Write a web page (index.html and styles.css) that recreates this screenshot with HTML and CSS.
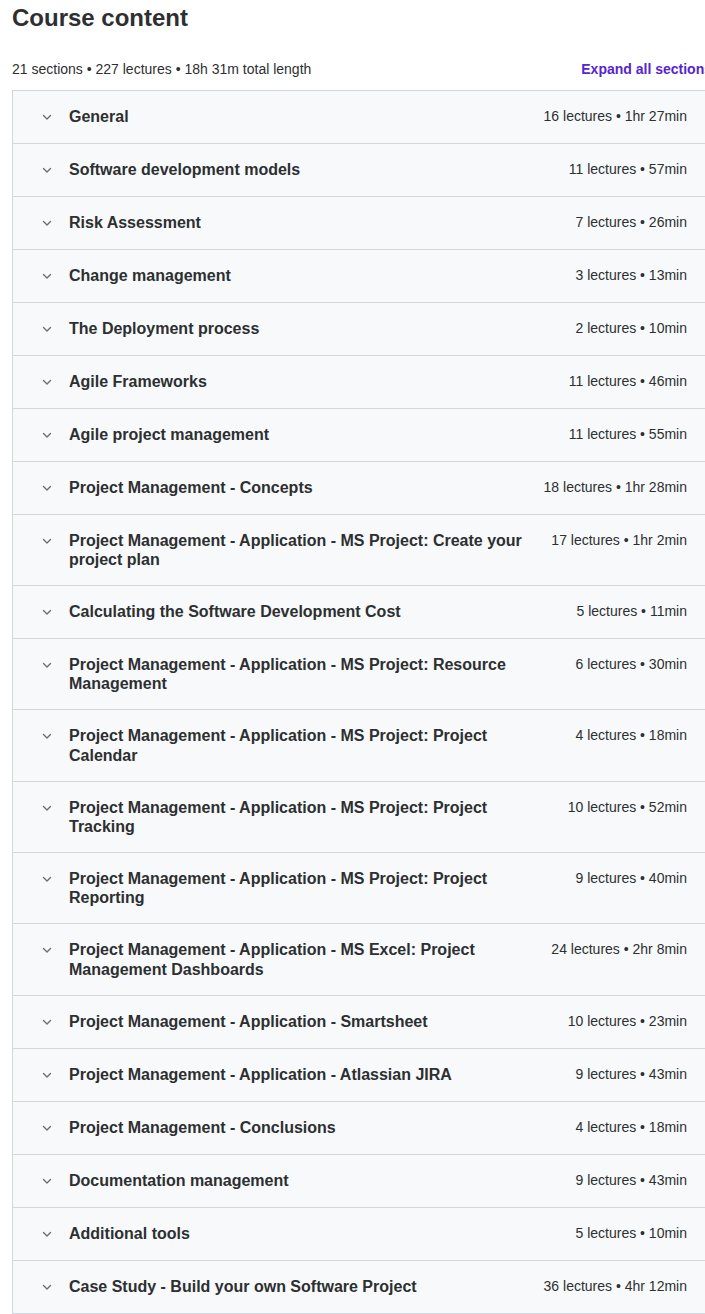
FILE: index.html
```html
<!DOCTYPE html>
<html lang="en">
<head>
<meta charset="utf-8">
<title>Course content</title>
<link rel="stylesheet" href="styles.css">
</head>
<body>
<main class="curriculum">
  <h2 class="curriculum-title">Course content</h2>
  <div class="curriculum-summary">
    <span>21 sections • 227 lectures • 18h 31m total length</span>
    <button class="expand-all" type="button">Expand all sections</button>
  </div>
  <div class="sections">
    <div class="section"><span class="chev"><svg viewBox="0 0 12 12"><path d="M2.5 4.5 6 8 9.5 4.5"/></svg></span><span class="section-title">General</span><span class="section-meta">16 lectures • 1hr 27min</span></div>
    <div class="section"><span class="chev"><svg viewBox="0 0 12 12"><path d="M2.5 4.5 6 8 9.5 4.5"/></svg></span><span class="section-title">Software development models</span><span class="section-meta">11 lectures • 57min</span></div>
    <div class="section"><span class="chev"><svg viewBox="0 0 12 12"><path d="M2.5 4.5 6 8 9.5 4.5"/></svg></span><span class="section-title">Risk Assessment</span><span class="section-meta">7 lectures • 26min</span></div>
    <div class="section"><span class="chev"><svg viewBox="0 0 12 12"><path d="M2.5 4.5 6 8 9.5 4.5"/></svg></span><span class="section-title">Change management</span><span class="section-meta">3 lectures • 13min</span></div>
    <div class="section"><span class="chev"><svg viewBox="0 0 12 12"><path d="M2.5 4.5 6 8 9.5 4.5"/></svg></span><span class="section-title">The Deployment process</span><span class="section-meta">2 lectures • 10min</span></div>
    <div class="section"><span class="chev"><svg viewBox="0 0 12 12"><path d="M2.5 4.5 6 8 9.5 4.5"/></svg></span><span class="section-title">Agile Frameworks</span><span class="section-meta">11 lectures • 46min</span></div>
    <div class="section"><span class="chev"><svg viewBox="0 0 12 12"><path d="M2.5 4.5 6 8 9.5 4.5"/></svg></span><span class="section-title">Agile project management</span><span class="section-meta">11 lectures • 55min</span></div>
    <div class="section"><span class="chev"><svg viewBox="0 0 12 12"><path d="M2.5 4.5 6 8 9.5 4.5"/></svg></span><span class="section-title">Project Management - Concepts</span><span class="section-meta">18 lectures • 1hr 28min</span></div>
    <div class="section"><span class="chev"><svg viewBox="0 0 12 12"><path d="M2.5 4.5 6 8 9.5 4.5"/></svg></span><span class="section-title">Project Management - Application - MS Project: Create your project plan</span><span class="section-meta">17 lectures • 1hr 2min</span></div>
    <div class="section"><span class="chev"><svg viewBox="0 0 12 12"><path d="M2.5 4.5 6 8 9.5 4.5"/></svg></span><span class="section-title">Calculating the Software Development Cost</span><span class="section-meta">5 lectures • 11min</span></div>
    <div class="section"><span class="chev"><svg viewBox="0 0 12 12"><path d="M2.5 4.5 6 8 9.5 4.5"/></svg></span><span class="section-title">Project Management - Application - MS Project: Resource Management</span><span class="section-meta">6 lectures • 30min</span></div>
    <div class="section"><span class="chev"><svg viewBox="0 0 12 12"><path d="M2.5 4.5 6 8 9.5 4.5"/></svg></span><span class="section-title">Project Management - Application - MS Project: Project Calendar</span><span class="section-meta">4 lectures • 18min</span></div>
    <div class="section"><span class="chev"><svg viewBox="0 0 12 12"><path d="M2.5 4.5 6 8 9.5 4.5"/></svg></span><span class="section-title">Project Management - Application - MS Project: Project Tracking</span><span class="section-meta">10 lectures • 52min</span></div>
    <div class="section"><span class="chev"><svg viewBox="0 0 12 12"><path d="M2.5 4.5 6 8 9.5 4.5"/></svg></span><span class="section-title">Project Management - Application - MS Project: Project Reporting</span><span class="section-meta">9 lectures • 40min</span></div>
    <div class="section"><span class="chev"><svg viewBox="0 0 12 12"><path d="M2.5 4.5 6 8 9.5 4.5"/></svg></span><span class="section-title">Project Management - Application - MS Excel: Project Management Dashboards</span><span class="section-meta">24 lectures • 2hr 8min</span></div>
    <div class="section"><span class="chev"><svg viewBox="0 0 12 12"><path d="M2.5 4.5 6 8 9.5 4.5"/></svg></span><span class="section-title">Project Management - Application - Smartsheet</span><span class="section-meta">10 lectures • 23min</span></div>
    <div class="section"><span class="chev"><svg viewBox="0 0 12 12"><path d="M2.5 4.5 6 8 9.5 4.5"/></svg></span><span class="section-title">Project Management - Application - Atlassian JIRA</span><span class="section-meta">9 lectures • 43min</span></div>
    <div class="section"><span class="chev"><svg viewBox="0 0 12 12"><path d="M2.5 4.5 6 8 9.5 4.5"/></svg></span><span class="section-title">Project Management - Conclusions</span><span class="section-meta">4 lectures • 18min</span></div>
    <div class="section"><span class="chev"><svg viewBox="0 0 12 12"><path d="M2.5 4.5 6 8 9.5 4.5"/></svg></span><span class="section-title">Documentation management</span><span class="section-meta">9 lectures • 43min</span></div>
    <div class="section"><span class="chev"><svg viewBox="0 0 12 12"><path d="M2.5 4.5 6 8 9.5 4.5"/></svg></span><span class="section-title">Additional tools</span><span class="section-meta">5 lectures • 10min</span></div>
    <div class="section"><span class="chev"><svg viewBox="0 0 12 12"><path d="M2.5 4.5 6 8 9.5 4.5"/></svg></span><span class="section-title">Case Study - Build your own Software Project</span><span class="section-meta">36 lectures • 4hr 12min</span></div>
  </div>
</main>
</body>
</html>
```
FILE: styles.css
```css
html {
  overflow: hidden;
}

body {
  margin: 0;
  background: #ffffff;
  color: #2d2f31;
  font-family: "Liberation Sans", Arial, sans-serif;
}

.curriculum {
  width: 700px;
  padding: 4px 0 0 12px;
}

.curriculum-title {
  margin: 0;
  font-size: 24px;
  line-height: 28.8px;
  font-weight: 700;
}

.curriculum-summary {
  display: flex;
  justify-content: space-between;
  align-items: center;
  margin-top: 26px;
  margin-bottom: 11px;
  font-size: 14px;
  line-height: 20px;
}

.expand-all {
  border: 0;
  padding: 0;
  background: none;
  color: #5624d0;
  font: 700 14px/20px "Liberation Sans", Arial, sans-serif;
  cursor: pointer;
}

.sections {
  border: 1px solid #d1d7dc;
  border-bottom: 0;
}

.section {
  display: flex;
  align-items: flex-start;
  gap: 16px;
  padding: 16px 24px 16px 28px;
  background: #f7f9fa;
  border-bottom: 1px solid #d1d7dc;
}

.chev {
  flex: none;
  display: flex;
  align-items: center;
  height: 20px;
}

.chev svg {
  width: 12px;
  height: 12px;
  fill: none;
  stroke: #6a6f73;
  stroke-width: 1.4;
  stroke-linecap: round;
  stroke-linejoin: round;
}

.section-title {
  flex: 1;
  font-size: 16px;
  line-height: 19.15px;
  font-weight: 700;
  margin-right: 8px;
}

.section-meta {
  flex: none;
  font-size: 14px;
  line-height: 19px;
  white-space: nowrap;
}
```
